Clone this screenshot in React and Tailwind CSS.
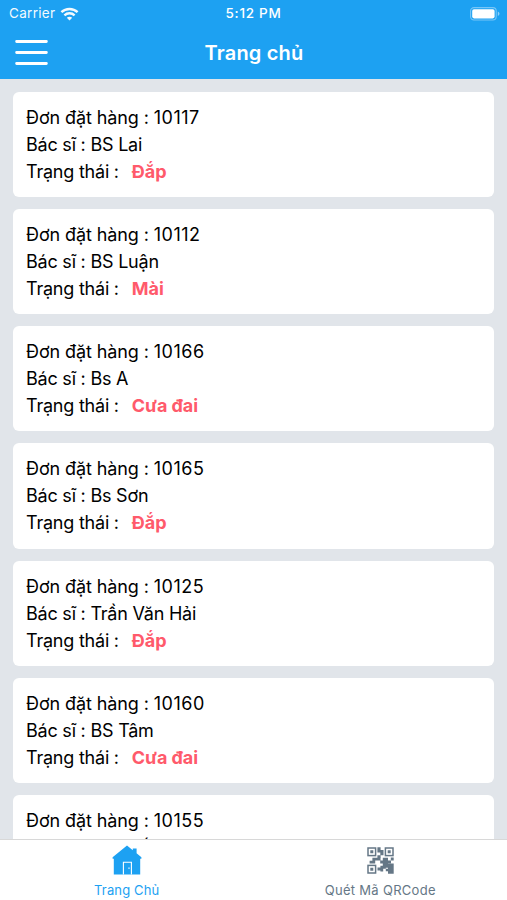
const orders = [
  { id: 10117, doctor: 'BS Lai', status: 'Đắp' },
  { id: 10112, doctor: 'BS Luận', status: 'Mài' },
  { id: 10166, doctor: 'Bs A', status: 'Cưa đai' },
  { id: 10165, doctor: 'Bs Sơn', status: 'Đắp' },
  { id: 10125, doctor: 'Trần Văn Hải', status: 'Đắp' },
  { id: 10160, doctor: 'BS Tâm', status: 'Cưa đai' },
  { id: 10155, doctor: 'BS Tuấn' },
];

function WifiIcon() {
  return (
    <svg className="ml-[5px] h-[14px] w-[19px]" viewBox="0 0 18 14" fill="none" stroke="white" strokeWidth="2.4">
      <path d="M0.9 5.2C5.4 0.9 12.6 0.9 17.1 5.2" />
      <path d="M3.9 8.3C6.8 5.6 11.2 5.6 14.1 8.3" />
      <path d="M9 13.6L6.3 10.8C7.8 9.4 10.2 9.4 11.7 10.8Z" fill="white" stroke="none" />
    </svg>
  );
}

function BatteryIcon() {
  return (
    <svg className="h-[14px] w-[31px]" viewBox="0 0 31 14">
      <rect x="0.6" y="0.6" width="25.6" height="12.4" rx="3.4" fill="none" stroke="white" strokeOpacity="0.4" strokeWidth="1.1" />
      <rect x="2.2" y="2.2" width="22.4" height="9.2" rx="1.8" fill="white" />
      <path d="M27.8 4.6C30 5.4 30 8.2 27.8 9Z" fill="white" fillOpacity="0.5" />
    </svg>
  );
}

function MenuIcon() {
  return (
    <svg className="h-[27px] w-[33px]" viewBox="0 0 33 27" stroke="white" strokeWidth="2.8" strokeLinecap="round">
      <path d="M1.6 2.5H31.4M1.6 13.5H31.4M1.6 24.5H31.4" />
    </svg>
  );
}

function HomeIcon() {
  return (
    <svg className="ml-px h-[30px] w-[30px]" viewBox="0 0 30 30">
      <path
        d="M15 0.6L20.8 5.2V3.4H24.6V8.2L29.4 12.2V13.8H28.2V29.4H1.8V13.8H0.6V12.2Z"
        fill="#1da1f2"
      />
      <path d="M11.4 29.4V17.3H19.4V29.4" fill="none" stroke="white" strokeWidth="1.1" />
      <path d="M17 22.4V24" stroke="white" strokeWidth="1" />
    </svg>
  );
}

function QrIcon() {
  return (
    <svg className="h-[27px] w-[27px]" viewBox="0 0 27 27" fill="#657786">
      <g fill="none" stroke="#657786" strokeWidth="1.5">
        <rect x="1" y="1" width="7.6" height="7.6" />
        <rect x="18.4" y="1" width="7.6" height="7.6" />
        <rect x="1" y="18.4" width="7.6" height="7.6" />
      </g>
      <path d="M3.3 3.3h3v3h-3zM20.7 3.3h3v3h-3zM3.3 20.7h3v3h-3z" />
      <path d="M10.4 0.3h3.2v2.6h2.9v5.3h-2.9v2.9h-3.2V8.2h2.9V5.5h-2.9z" />
      <path d="M5.4 10.8h8.1v2.6h2.3v-2.6h5.2v2.6h3v3h-3v2.8h-5.2v-2.8h-2.6v-3H8.2v3H2.6v-2.6h2.8z" />
      <path d="M23.8 10.6h2.9v2.8h-2.9zM13.4 18.7h5.4v3h-2.6v2.7h-2.8v-1h-2.9v-2.9h2.9zM18.8 18.7h2.2v-2.3h5.7v10.3h-5.7v-2.4h-2.2v-2.6h2.2v-1h-2.2z" />
    </svg>
  );
}

function OrderCard({ order }) {
  return (
    <div className="h-[105.25px] shrink-0 rounded-md bg-white px-[13px] py-[12px] text-[18px] leading-[27px] tracking-[-0.22px] text-black">
      <p className="tracking-[-0.1px]">
        Đơn đặt hàng : <span className="tracking-[0.5px]">{order.id}</span>
      </p>
      <p>Bác sĩ : {order.doctor}</p>
      {order.status && (
        <p>
          Trạng thái :
          <span className="ml-[13px] font-bold tracking-[-0.05px] text-[#ff5a6b]">{order.status}</span>
        </p>
      )}
    </div>
  );
}

export default function App() {
  return (
    <div className="flex h-[900px] w-[507px] flex-col overflow-hidden bg-[#e1e5ea] font-['Inter','Liberation_Sans',sans-serif]">
      <header className="h-[79px] shrink-0 bg-[#1da1f2] text-white">
        <div className="grid h-[27px] grid-cols-3 items-center pr-[6px] pl-[9px] text-[13.5px]">
          <div className="flex items-center tracking-[0.3px] opacity-95">
            Carrier
            <WifiIcon />
          </div>
          <span className="pr-[3px] text-center font-medium tracking-[0.7px]">5:12 PM</span>
          <div className="flex justify-end">
            <BatteryIcon />
          </div>
        </div>
        <div className="grid h-[51px] grid-cols-[33px_1fr_33px] items-center px-[15px]">
          <MenuIcon />
          <h1 className="pl-px text-center text-[20px] font-semibold tracking-[0.2px]">Trang chủ</h1>
        </div>
      </header>

      <main className="flex min-h-0 flex-1 flex-col gap-[12px] overflow-hidden px-[13px] pt-[12.5px]">
        {orders.map((order) => (
          <OrderCard key={order.id} order={order} />
        ))}
      </main>

      <nav className="grid h-[61px] shrink-0 grid-cols-2 border-t border-[#d8d8d8] bg-white text-[13px]">
        <div className="flex flex-col items-center pt-[5px] text-[#1da1f2]">
          <HomeIcon />
          <span className="mt-[5px] leading-[20px] tracking-[0.15px]">Trang Chủ</span>
        </div>
        <div className="flex flex-col items-center pt-[7px] text-[#657786]">
          <QrIcon />
          <span className="mt-[6px] leading-[20px] tracking-[0.3px]">Quét Mã QRCode</span>
        </div>
      </nav>
    </div>
  );
}
